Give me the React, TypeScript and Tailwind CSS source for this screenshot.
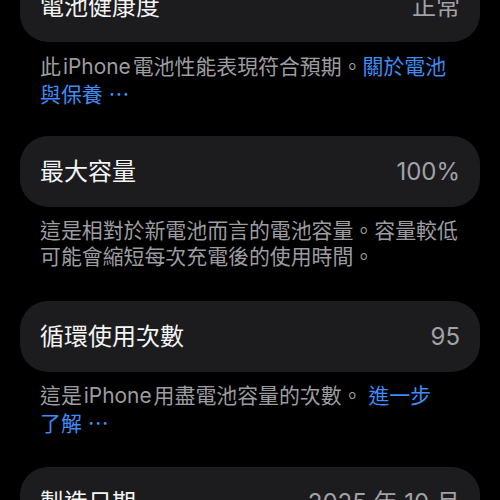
import React from 'react';

const font = { fontFamily: '"Inter", "Noto Sans CJK TC", sans-serif' };

type RowProps = { label: string; value: string; first?: boolean };

function Row({ label, value, first }: RowProps) {
  return (
    <div
      className={`flex h-[71px] shrink-0 items-center justify-between rounded-[28px] bg-[#1c1c1e] px-5 ${
        first ? '-mt-[29px]' : ''
      }`}
    >
      <span className="text-[24px] text-[#f4f4f5]">{label}</span>
      <span className="text-[24px] text-[#a1a1a6]">{value}</span>
    </div>
  );
}

function Dots() {
  return <span className="[font-family:'Noto_Sans_CJK_TC',sans-serif]">…</span>;
}

export default function App() {
  return (
    <div className="h-[500px] w-[500px] overflow-hidden bg-black" style={font}>
      <div className="flex flex-col px-5">
        <Row label="電池健康度" value="正常" first />
        <p className="mt-3 mb-[28px] px-5 text-[20.9px] leading-[26px] text-[#9c9ca1]">
          此<span className="mx-[2px]">iPhone</span>電池性能表現符合預期。
          <span className="text-[#3f8cf6]">關於電池</span>
          <br />
          <span className="text-[#3f8cf6]">
            與保養 <Dots />
          </span>
        </p>

        <Row label="最大容量" value="100%" />
        <p className="mt-[11px] mb-[31px] px-5 text-[20.9px] leading-[26px] text-[#9c9ca1]">
          這是相對於新電池而言的電池容量。容量較低
          <br />
          可能會縮短每次充電後的使用時間。
        </p>

        <Row label="循環使用次數" value="95" />
        <p className="mt-[11px] mb-[30px] px-5 text-[20.9px] leading-[26px] text-[#9c9ca1]">
          這是<span className="mx-[2px]">iPhone</span>用盡電池容量的次數。 <span className="text-[#3f8cf6]">進一步</span>
          <br />
          <span className="text-[#3f8cf6]">
            了解 <Dots />
          </span>
        </p>

        <Row label="製造日期" value="2025 年 10 月" />
      </div>
    </div>
  );
}
